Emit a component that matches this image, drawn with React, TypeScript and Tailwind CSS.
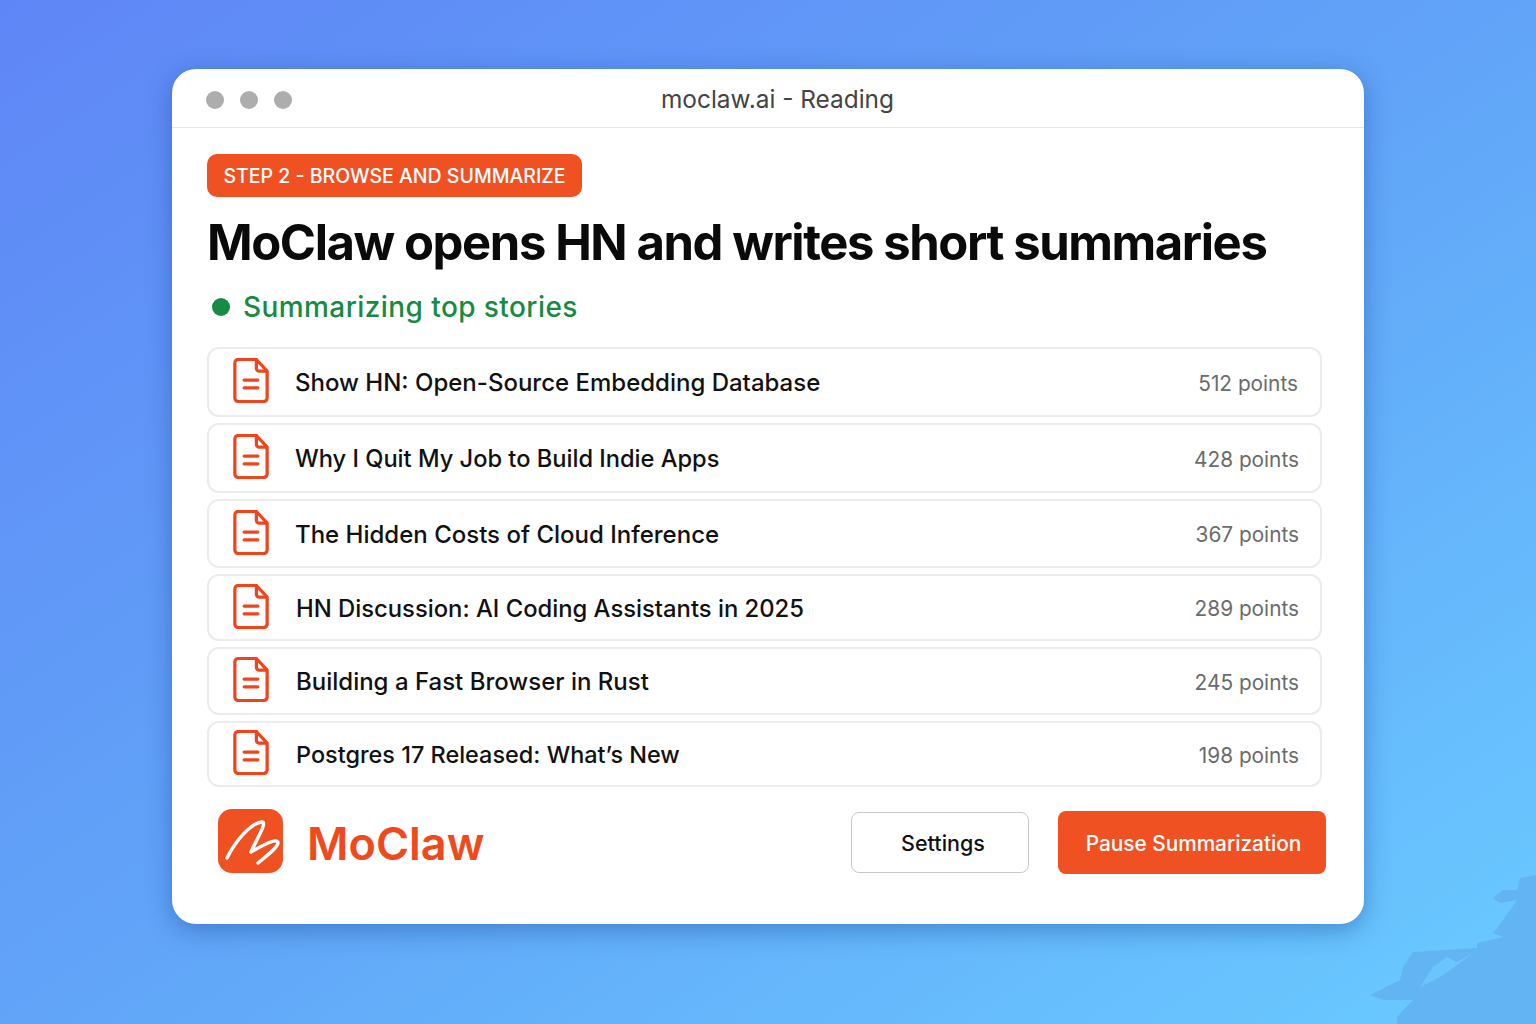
const stories = [
  { title: 'Show HN: Open-Source Embedding Database', points: '512 points', row: 'h-[70px] mb-[6px] pr-[22px]', text: 'ml-[26px] text-[24px]' },
  { title: 'Why I Quit My Job to Build Indie Apps', points: '428 points', row: 'h-[70px] mb-[6px] pr-[21px]', text: 'ml-[26px] text-[23.65px]' },
  { title: 'The Hidden Costs of Cloud Inference', points: '367 points', row: 'h-[69px] mb-[6px] pr-[21px]', text: 'ml-[26px] text-[24px]' },
  { title: 'HN Discussion: AI Coding Assistants in 2025', points: '289 points', row: 'h-[67px] mb-[6px] pr-[21px]', text: 'ml-[27px] text-[23.8px]' },
  { title: 'Building a Fast Browser in Rust', points: '245 points', row: 'h-[68px] mb-[6px] pr-[21px]', text: 'ml-[27px] text-[24px]' },
  { title: 'Postgres 17 Released: What’s New', points: '198 points', row: 'h-[66px] pr-[21px]', text: 'ml-[27px] text-[23.45px]' },
]

const DocIcon = () => (
  <svg width="36" height="45" viewBox="0 0 36 46" fill="none" stroke="#f0441c" strokeWidth="3.3" strokeLinecap="round" strokeLinejoin="round" className="shrink-0 -mt-[3px]">
    <path d="M5 1.5H23.5L34.5 13.5V41a3.5 3.5 0 0 1-3.5 3.5H5A3.5 3.5 0 0 1 1.5 41V5A3.5 3.5 0 0 1 5 1.5Z" />
    <path d="M23.5 2V10.5a3 3 0 0 0 3 3H34" />
    <path d="M11 22.5H25M11 30.5H25" />
  </svg>
)

const Logo = () => (
  <div className="w-[65px] h-[64px] -mt-[3px] rounded-[14px] bg-[#f05123] shrink-0">
    <svg width="65" height="64" viewBox="0 0 65 64" fill="none" stroke="#ffffff" strokeWidth="3.4" strokeLinecap="round" strokeLinejoin="round">
      <path d="M9 49C17 33 32 14 44 13C50 13 37 33 33 43C42 38 57 29 60 33C61 38 47 48 40 54" />
    </svg>
  </div>
)

export default function App() {
  return (
    <div
      className="relative w-[1536px] h-[1024px] overflow-hidden pt-[69px] pl-[172px] bg-gradient-to-br from-[#5f86f6] via-[#61a4f8] to-[#6acbff]"
      style={{ fontFamily: 'Inter, "Noto Sans", sans-serif' }}
    >
      {/* patch in the corner of the wallpaper */}
      <svg className="absolute inset-0" width="1536" height="1024" viewBox="0 0 1536 1024">
        <path
          fill="#62b5f2"
          d="M1536 875L1520 878L1517 890L1503 890L1493 898L1500 903L1517 900L1503 920L1493 933L1503 937L1477 943L1477 948L1413 952L1403 967L1400 980L1370 995L1383 1000L1413 1000L1397 1017L1397 1024H1536Z"
        />
        <path fill="#6ac5fd" d="M1433 967L1447 957L1457 962L1473 953L1460 963L1440 977L1420 987Z" />
      </svg>

      <div className="relative w-[1192px] h-[855px] bg-white rounded-[24px] shadow-[0_6px_26px_rgba(25,70,150,0.45)] flex flex-col">
        {/* Title bar */}
        <div className="relative h-[59px] shrink-0 border-b border-[#e6e6e6] flex items-center pt-[3px] pl-[34px] gap-[16px]">
          <span className="w-[18px] h-[18px] rounded-full bg-[#adadad]" />
          <span className="w-[18px] h-[18px] rounded-full bg-[#adadad]" />
          <span className="w-[18px] h-[18px] rounded-full bg-[#adadad]" />
          <span className="ml-[353px] text-[24.4px] text-[#444444] whitespace-nowrap">moclaw.ai - Reading</span>
        </div>

        {/* Content */}
        <div className="flex-1 flex flex-col pl-[35px] pr-[38px] pt-[26px]">
          <div className="w-[375px] h-[43px] pt-[3px] rounded-[10px] bg-[#f05123] flex items-center justify-center text-white text-[19.5px] font-medium whitespace-nowrap">
            STEP 2 - BROWSE AND SUMMARIZE
          </div>

          <h1 className="mt-[15px] text-[49px] leading-[62px] font-bold tracking-[-0.029em] text-[#0a0a0a] whitespace-nowrap">
            MoClaw opens HN and writes short summaries
          </h1>

          <div className="mt-[13px] ml-[5px] flex items-center gap-[13px] h-[40px]">
            <span className="w-[18px] h-[18px] rounded-full bg-[#178a43]" />
            <span className="text-[28px] font-medium text-[#178a43] tracking-[0.015em] whitespace-nowrap">Summarizing top stories</span>
          </div>

          <div className="mt-[20px] mr-[4px] flex flex-col">
            {stories.map((s) => (
              <div key={s.title} className={`${s.row} flex items-center pl-[24px] bg-white border-2 border-[#ececec] rounded-[12px]`}>
                <DocIcon />
                <span className={`${s.text} pt-[2px] font-medium text-[#111111] whitespace-nowrap`}>{s.title}</span>
                <span className="ml-auto pt-[3px] text-[20.8px] text-[#6b6b6b] whitespace-nowrap">{s.points}</span>
              </div>
            ))}
          </div>

          <div className="mt-[24px] h-[63px] flex items-center pl-[11px]">
            <Logo />
            <span className="ml-[24px] pt-[2px] text-[45px] font-semibold text-[#ee4a1d] whitespace-nowrap">MoClaw</span>
            <button className="ml-auto w-[178px] h-[61px] pl-[6px] pt-[2px] rounded-[8px] border border-[#c9c9c9] bg-white text-[21.5px] font-medium text-[#111111]">
              Settings
            </button>
            <button className="ml-[29px] w-[268px] h-[63px] pl-[3px] pt-[2px] rounded-[8px] bg-[#f05123] text-[20.8px] font-medium text-white whitespace-nowrap">
              Pause Summarization
            </button>
          </div>
        </div>
      </div>
    </div>
  )
}
